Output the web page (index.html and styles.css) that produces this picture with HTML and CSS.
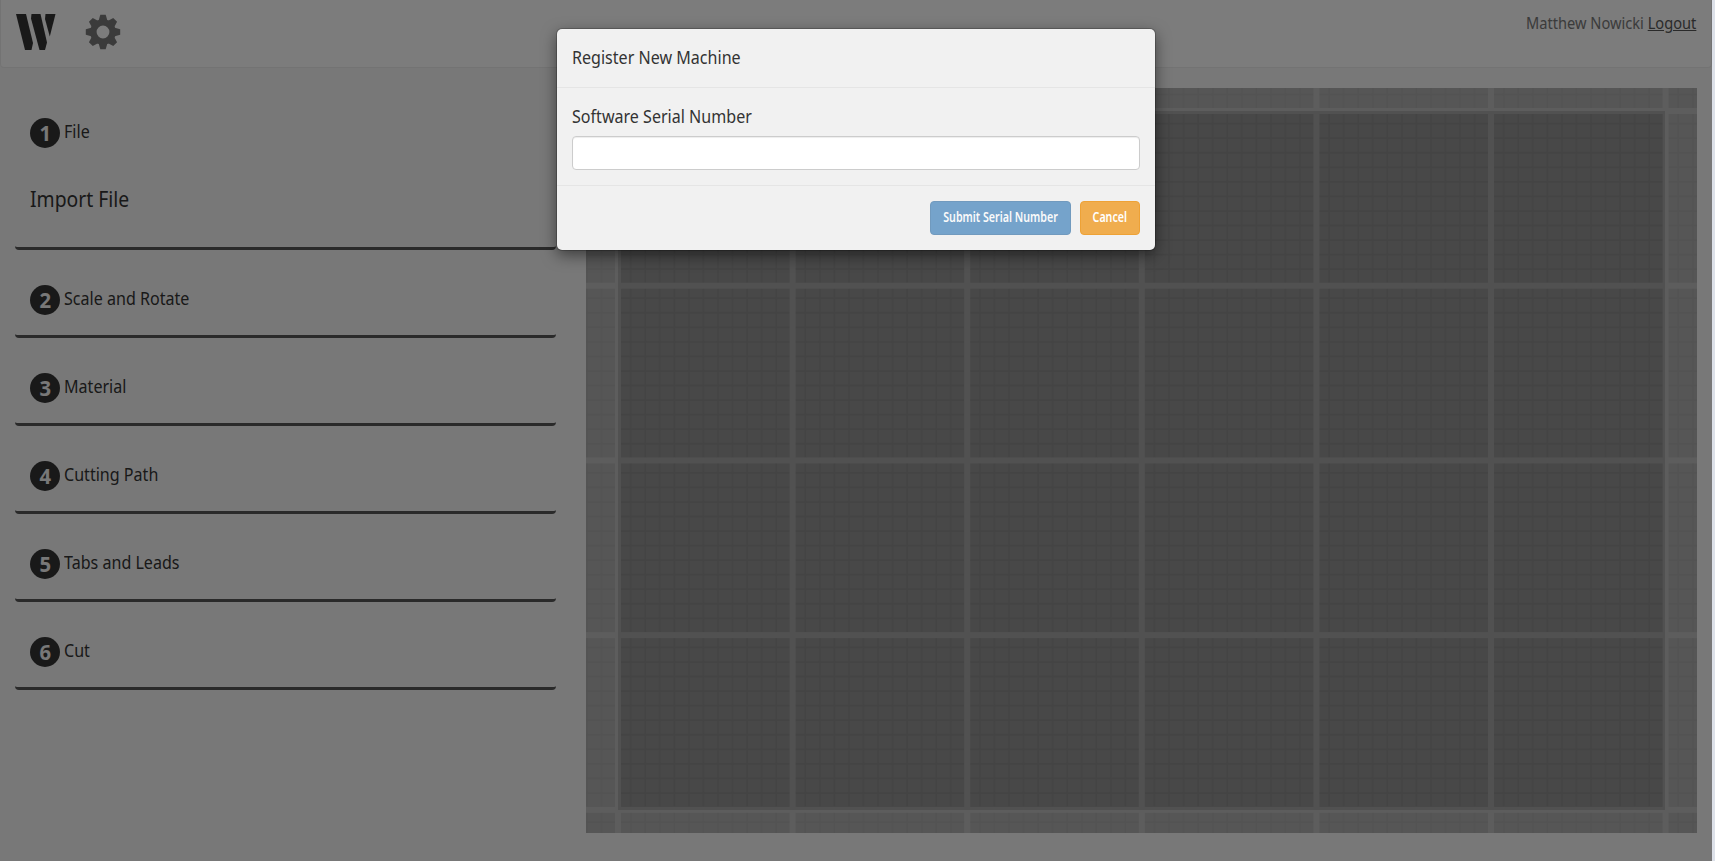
FILE: index.html
```
<!DOCTYPE html>
<html lang="en">
<head>
  <meta charset="UTF-8">
  <meta name="viewport" content="width=device-width, initial-scale=1.0">
  <title>Register New Machine</title>
  <link rel="stylesheet" href="styles.css">
</head>
<body>
  <div class="page">
    <nav class="navbar">
      <div class="navbar-icons">
        <svg class="logo" width="40" height="37" viewBox="0 0 40 37">
          <path d="M0 0h10L17 29l-1.500 7H9z"/>
          <path d="M15.500 0H24.500L31 28.500L29 36H23.500L15 4.500z"/>
          <path d="M29.500 0H39.500L33.800 22.500L29 5z"/>
        </svg>
        <svg class="gear" width="36" height="36" viewBox="-18 -18 36 36">
          <g id="teeth">
            <path id="tooth" d="M-4.500-11L-2.700-17.200h5.400L4.500-11z"/>
            <use href="#tooth" transform="rotate(45)"/>
            <use href="#tooth" transform="rotate(90)"/>
            <use href="#tooth" transform="rotate(135)"/>
          </g>
          <use href="#teeth" transform="rotate(180)"/>
          <circle class="gear-ring" r="9.600"/>
        </svg>
      </div>
      <p class="user">Matthew Nowicki <a href="#">Logout</a></p>
    </nav>

    <div class="content">
      <div class="steps">
        <div class="step step-open">
          <div class="step-title"><span class="badge"><span>1</span></span><span class="label">File</span></div>
          <div class="step-body">Import File</div>
        </div>
        <div class="step">
          <div class="step-title"><span class="badge"><span>2</span></span><span class="label">Scale and Rotate</span></div>
        </div>
        <div class="step">
          <div class="step-title"><span class="badge"><span>3</span></span><span class="label">Material</span></div>
        </div>
        <div class="step">
          <div class="step-title"><span class="badge"><span>4</span></span><span class="label">Cutting Path</span></div>
        </div>
        <div class="step">
          <div class="step-title"><span class="badge"><span>5</span></span><span class="label">Tabs and Leads</span></div>
        </div>
        <div class="step">
          <div class="step-title"><span class="badge"><span>6</span></span><span class="label">Cut</span></div>
        </div>
      </div>

      <svg class="bed" width="1111" height="745" viewBox="0 0 1111 745">
        <defs>
          <pattern id="minor" x="31" y="22" width="14.550" height="14.550" patternUnits="userSpaceOnUse">
            <path class="minor-line" d="M13.700 0V14.550M0 13.700H14.550"/>
          </pattern>
          <pattern id="major" x="29" y="20" width="174.600" height="174.700" patternUnits="userSpaceOnUse">
            <path class="major-line" d="M3 0V174.700M0 3H174.600"/>
          </pattern>
        </defs>
        <rect class="bed-base" width="1111" height="745"/>
        <rect width="1111" height="745" fill="url(#minor)"/>
        <rect width="1111" height="745" fill="url(#major)"/>
        <path class="bed-margin" fill-rule="evenodd" d="M0 0H1111V745H0zM32 23V722H1079V23z"/>
      </svg>
    </div>

    <div class="backdrop"></div>
    <div class="modal">
      <div class="modal-header"><div class="modal-title">Register New Machine</div></div>
      <div class="modal-body">
        <label for="serial">Software Serial Number</label>
        <input type="text" id="serial" name="serial">
      </div>
      <div class="modal-footer">
        <button class="btn btn-primary" disabled><span>Submit Serial Number</span></button>
        <button class="btn btn-warning"><span>Cancel</span></button>
      </div>
    </div>
  </div>
</body>
</html>
```
FILE: styles.css
```
* {
  box-sizing: border-box;
}
body {
  margin: 0;
  background: #dde1e9;
  font-family: "Noto Sans", "Open Sans", sans-serif;
  color: #333;
}
.page {
  position: relative;
  width: 1712px;
  height: 861px;
  background: #f1f1f1;
  overflow: hidden;
}
.navbar {
  display: flex;
  justify-content: space-between;
  height: 68px;
  padding: 14px 15px 0;
  background: #f8f8f8;
  border: 1px solid #e7e7e7;
  border-top: 0;
  border-radius: 0 0 4px 4px;
}
.navbar-icons {
  display: flex;
  gap: 29px;
}
.logo {
  fill: #333;
}
.gear {
  fill: #777;
}
.gear-ring {
  fill: none;
  stroke: #777;
  stroke-width: 6.4;
}
/* narrow lettering */
.user, .label, .step-body, .modal-title, .modal-body label {
  transform: scaleX(.893);
  transform-origin: left;
}
.user {
  margin: -2px 0 0;
  font-size: 16px;
  line-height: 22px;
  color: #777;
  transform: scaleX(.914);
  transform-origin: right;
}
.user a {
  color: #555;
}
.content {
  display: flex;
  padding: 20px 15px 0;
  gap: 30px;
}
.steps {
  width: 541px;
}
.step {
  height: 88px;
  padding: 35px 15px 0;
  border-bottom: 3px solid #555;
  border-radius: 4px;
}
.step-open {
  height: 162px;
  padding-top: 30px;
}
.step-title {
  display: flex;
  gap: 4px;
}
.badge {
  width: 30px;
  height: 30px;
  border-radius: 50%;
  background: #333;
  color: #f1f1f1;
  font-size: 22px;
  font-weight: bold;
  line-height: 29px;
  text-align: center;
}
.badge span {
  display: inline-block;
  transform: scaleX(.92);
}
.label {
  font-size: 18px;
  line-height: 26px;
}
.step-body {
  margin-top: 35px;
  font-size: 22px;
  line-height: 30px;
  transform: scaleX(.88);
}
.bed-base {
  fill: #919191;
}
.minor-line {
  stroke: #888;
  stroke-width: 1.5;
}
.major-line {
  stroke: #a3a3a3;
  stroke-width: 6;
}
.bed-margin {
  fill: #fff;
  fill-opacity: .26;
}
.backdrop {
  position: absolute;
  inset: 0;
  background: rgba(0, 0, 0, .5);
}
.modal {
  position: absolute;
  top: 29px;
  left: 557px;
  width: 598px;
  height: 221px;
  background: #f1f1f1;
  border-radius: 5px;
  box-shadow: 0 0 0 1px rgba(0, 0, 0, .2), 0 5px 15px rgba(0, 0, 0, .5);
}
.modal-header {
  height: 59px;
  padding: 14px 15px;
  border-bottom: 1px solid #e5e5e5;
  font-size: 18px;
  line-height: 28px;
}
.modal-body {
  padding: 14px 15px;
  height: 97px;
}
.modal-body label {
  display: block;
  height: 34px;
  font-size: 18px;
  line-height: 28px;
}
.modal-body input {
  display: block;
  width: 568px;
  height: 34px;
  border: 1px solid #ccc;
  border-radius: 4px;
  background: #fff;
  box-shadow: inset 0 1px 1px rgba(0, 0, 0, .075);
}
.modal-footer {
  display: flex;
  justify-content: flex-end;
  gap: 9px;
  padding: 15px;
  border-top: 1px solid #e5e5e5;
}
.btn {
  display: flex;
  justify-content: center;
  height: 34px;
  padding: 0;
  border: 1px solid;
  border-radius: 4px;
  font-family: inherit;
  font-size: 13.5px;
  font-weight: 600;
  line-height: 30px;
  color: #fff;
  white-space: nowrap;
}
.btn span {
  flex: none;
  transform: scaleX(.79);
}
.btn-primary {
  width: 141px;
  background: #337ab7;
  border-color: #2e6da4;
  opacity: .65;
}
.btn-warning {
  width: 60px;
  background: #f0ad4e;
  border-color: #eea236;
}
```
